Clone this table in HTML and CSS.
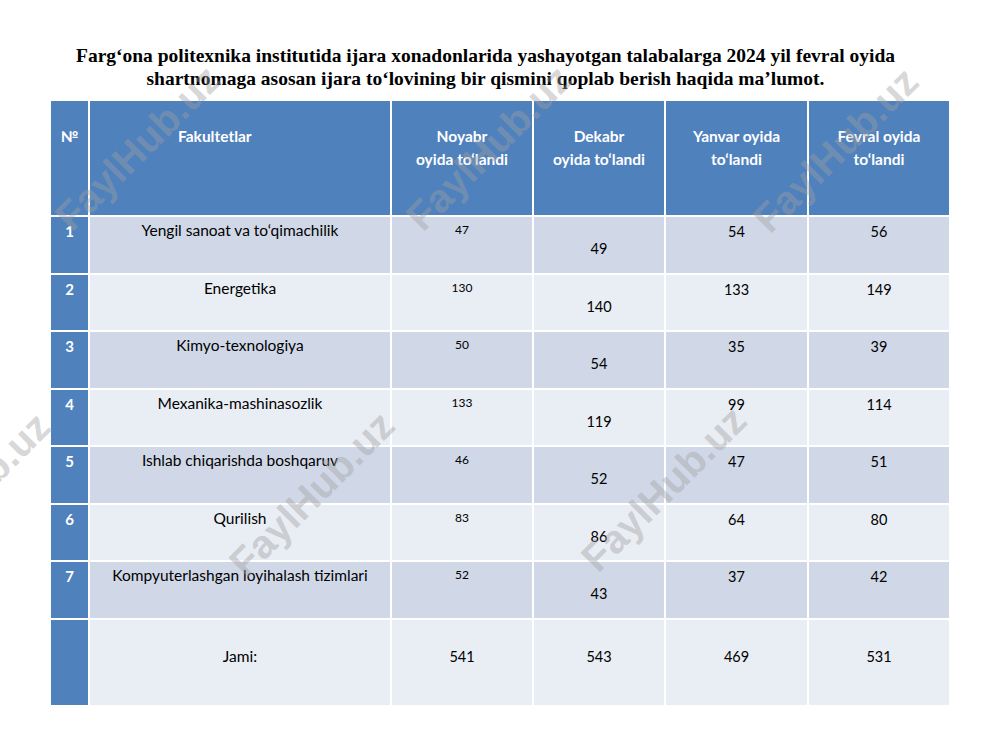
FILE: index.html
```html
<!DOCTYPE html>
<html lang="uz">
<head>
  <meta charset="UTF-8">
  <meta name="viewport" content="width=device-width, initial-scale=1.0">
  <title>Ijara to‘lovi</title>
  <link rel="stylesheet" href="styles.css">
</head>
<body>
  <div class='page'>
    <h1 class='title'>Farg‘ona politexnika institutida ijara xonadonlarida yashayotgan talabalarga 2024 yil fevral oyida<br>shartnomaga asosan ijara to‘lovining bir qismini qoplab berish haqida maʼlumot.</h1>

    <div class='tbl'>
      <!-- sarlavha -->
      <div class='cell head num'>№</div>
      <div class='cell head fak'>Fakultetlar</div>
      <div class='cell head'>Noyabr<br>oyida to‘landi</div>
      <div class='cell head'>Dekabr<br>oyida to‘landi</div>
      <div class='cell head'>Yanvar oyida<br>to‘landi</div>
      <div class='cell head'>Fevral oyida<br>to‘landi</div>

      <div class='cell num'>1</div>
      <div class='cell odd name'>Yengil sanoat va to‘qimachilik</div>
      <div class='cell odd small'>47</div>
      <div class='cell odd low'>49</div>
      <div class='cell odd'>54</div>
      <div class='cell odd'>56</div>

      <div class='cell num'>2</div>
      <div class='cell even name'>Energetika</div>
      <div class='cell even small'>130</div>
      <div class='cell even low'>140</div>
      <div class='cell even'>133</div>
      <div class='cell even'>149</div>

      <div class='cell num'>3</div>
      <div class='cell odd name'>Kimyo-texnologiya</div>
      <div class='cell odd small'>50</div>
      <div class='cell odd low'>54</div>
      <div class='cell odd'>35</div>
      <div class='cell odd'>39</div>

      <div class='cell num'>4</div>
      <div class='cell even name'>Mexanika-mashinasozlik</div>
      <div class='cell even small'>133</div>
      <div class='cell even low'>119</div>
      <div class='cell even'>99</div>
      <div class='cell even'>114</div>

      <div class='cell num'>5</div>
      <div class='cell odd name'>Ishlab chiqarishda boshqaruv</div>
      <div class='cell odd small'>46</div>
      <div class='cell odd low'>52</div>
      <div class='cell odd'>47</div>
      <div class='cell odd'>51</div>

      <div class='cell num'>6</div>
      <div class='cell even name'>Qurilish</div>
      <div class='cell even small'>83</div>
      <div class='cell even low'>86</div>
      <div class='cell even'>64</div>
      <div class='cell even'>80</div>

      <div class='cell num'>7</div>
      <div class='cell odd name'>Kompyuterlashgan loyihalash tizimlari</div>
      <div class='cell odd small'>52</div>
      <div class='cell odd low'>43</div>
      <div class='cell odd'>37</div>
      <div class='cell odd'>42</div>

      <!-- jami -->
      <div class='cell num'></div>
      <div class='cell even total name'>Jami:</div>
      <div class='cell even total'>541</div>
      <div class='cell even total'>543</div>
      <div class='cell even total'>469</div>
      <div class='cell even total'>531</div>
    </div>

    <!-- suv belgilari -->
    <span class='mark' style='left:138px;top:148px'>FaylHub.uz</span>
    <span class='mark' style='left:489px;top:148px'>FaylHub.uz</span>
    <span class='mark' style='left:836px;top:150px'>FaylHub.uz</span>
    <span class='mark' style='left:-32px;top:495px'>FaylHub.uz</span>
    <span class='mark' style='left:312px;top:494px'>FaylHub.uz</span>
    <span class='mark' style='left:664px;top:489px'>FaylHub.uz</span>
  </div>
</body>
</html>
```

FILE: styles.css
```css
body{
  margin:0px;
  background-color:#fff;
  font-family:Lato, "Noto Sans", sans-serif;
}
.page{
  width:1000px;
  height:750px;
  position:relative;
  overflow:hidden;
  padding-top:44px;
  box-sizing:border-box;
}
.title{
  margin:0 0 11px 0;
  padding-right:29px;
  font-family:"Liberation Serif", serif;
  font-weight:bold;
  font-size:19.5px;
  line-height:23px;
  text-align:center;
  color:#000;
}
.tbl{
  margin-left:51px;
  width:898px;
  display:grid;
  grid-template-columns:37px 300px 140px 130px 141px 140px;
  grid-template-rows:114px repeat(7, 55.5px) 85px;
  gap:2px;
  background-color:#fff;
}
.cell{
  font-size:14.5px;
  line-height:17px;
  color:#000;
  text-align:center;
  padding-top:6px;
}
.name{
  font-size:15.5px;
  padding-top:5px;
}
.head{
  background-color:#4f81bd;
  color:#fff;
  font-weight:bold;
  font-size:15.5px;
  line-height:23px;
  padding-top:24px;
}
.fak{
  text-align:left;
  padding-left:88px;
}
.num{
  background-color:#4f81bd;
  color:#fff;
  font-weight:bold;
  font-size:15px;
}
.odd{
  background-color:#d0d8e8;
}
.even{
  background-color:#e9edf4;
}
.small{
  font-size:12px;
  padding-top:4px;
}
.low{
  padding-top:23px;
}
.total{
  padding-top:28px;
}
/* suv belgisi */
.mark{
  position:absolute;
  transform:translate(-50%, -50%) rotate(-45deg);
  font-family:"Liberation Sans", sans-serif;
  font-weight:bold;
  font-size:40px;
  color:rgba(160,160,160,0.42);
  white-space:nowrap;
  pointer-events:none;
}
```
